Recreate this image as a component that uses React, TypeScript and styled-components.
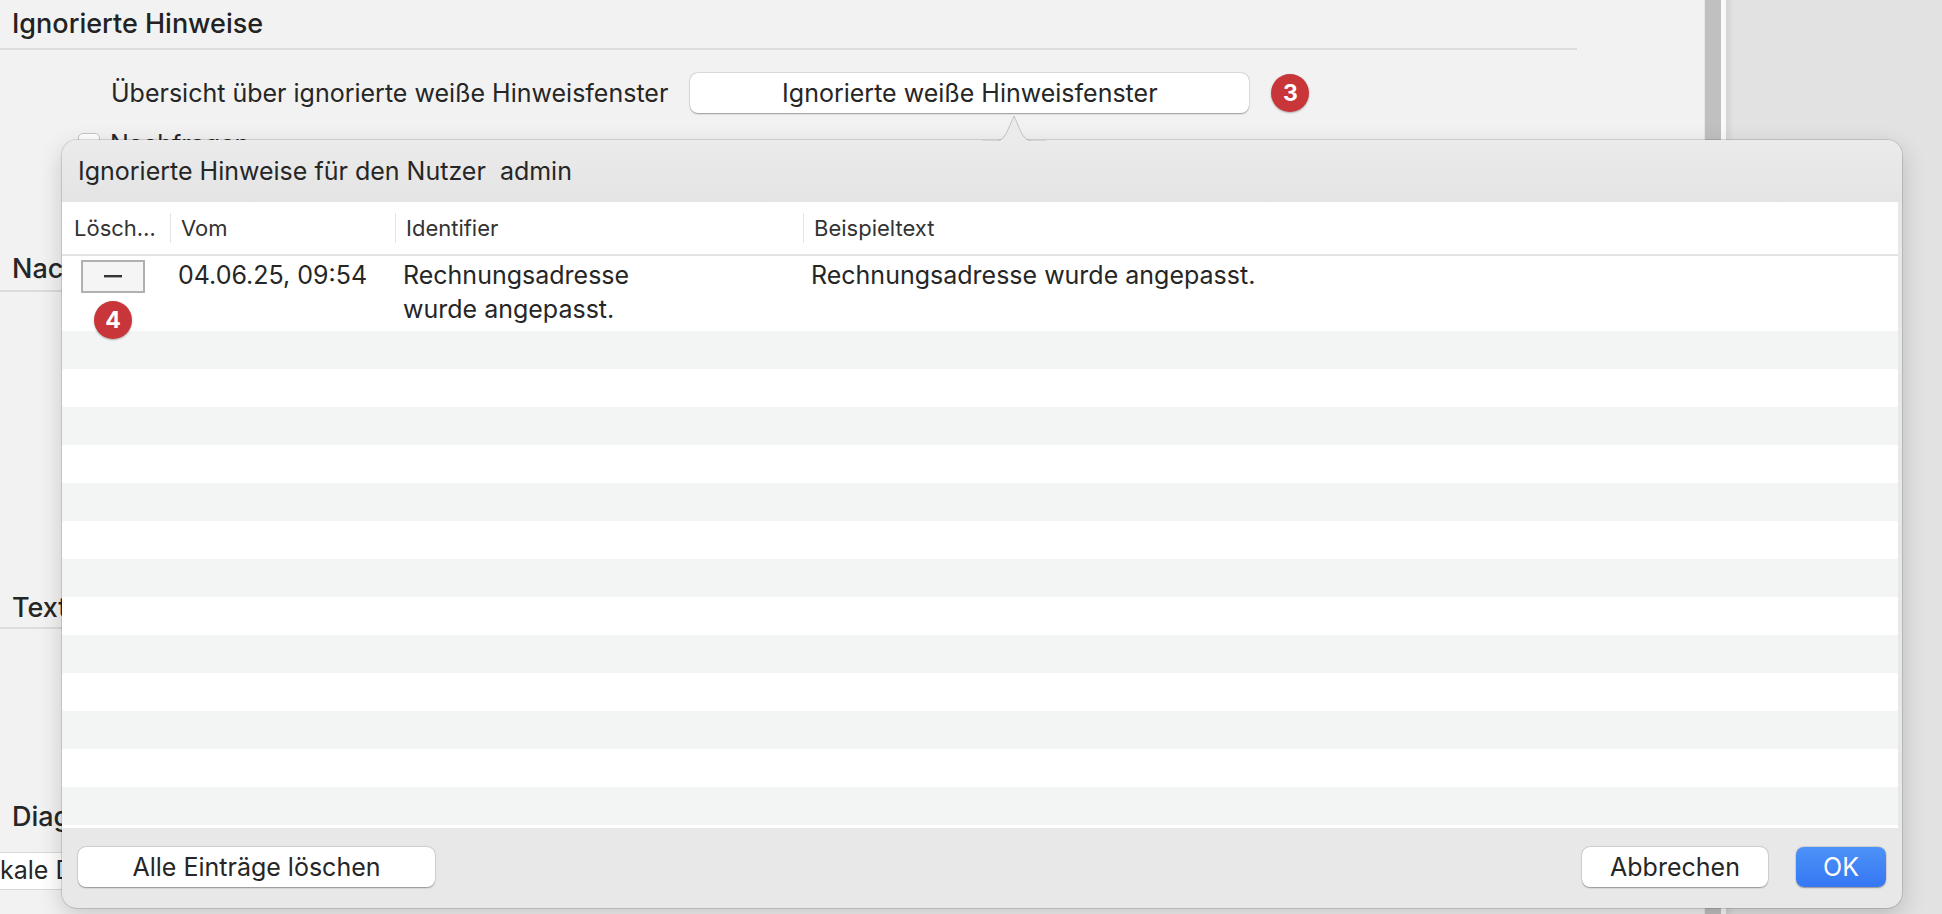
import React from "react";
import styled, { createGlobalStyle } from "styled-components";

const Global = createGlobalStyle`
  html, body { margin: 0; padding: 0; width: 1942px; height: 914px; overflow: hidden; }
  body { font-family: Inter, "Noto Sans", sans-serif; color: #262626; background: #e2e2e2; }
  * { box-sizing: border-box; }
`;

const Page = styled.div`
  position: relative; width: 1942px; height: 914px; display: flex;
`;
const Main = styled.div`
  width: 1704px; height: 914px; background: #f2f2f2; position: relative;
`;
const Scroll = styled.div`
  width: 22px; height: 914px; background: #fafafa; border-left: 1px solid #e6e6e6; display: flex;
`;
const Thumb = styled.div` width: 16px; background: #c0c0c0; `;
const Side = styled.div`
  flex: 1; background: linear-gradient(90deg, #d4d4d4 0, #e2e2e2 8px);
`;
const Section = styled.div<{ $h: number }>`
  height: ${p => p.$h}px; border-bottom: 2px solid #dcdcdc; width: 1577px;
  display: flex; align-items: flex-end; padding: 0 0 8px 12px;
  font-size: 27px; font-weight: 500; color: #222;
`;
const Row = styled.div`
  display: flex; align-items: center; height: 44px; margin-top: 21px; padding-left: 111px; gap: 22px;
  font-size: 25px;
`;
const MacBtn = styled.button<{ $w: number; $primary?: boolean }>`
  width: ${p => p.$w}px; height: 40px; border-radius: 8px; font-size: 25px;
  font-family: Inter, sans-serif;
  border: none; cursor: default; padding: 0; white-space: nowrap;
  background: ${p => (p.$primary ? "linear-gradient(#4c92f8,#3677f3)" : "#fff")};
  color: ${p => (p.$primary ? "#fff" : "#262626")};
  box-shadow: 0 0.5px 1.5px rgba(0,0,0,0.35), 0 0 0 0.5px rgba(0,0,0,0.08);
`;
const Badge = styled.div`
  width: 38px; height: 38px; border-radius: 50%; background: #c8363a; color: #fff;
  font-weight: 700; font-size: 23px; display: flex; align-items: center; justify-content: center;
  box-shadow: 0 1px 2px rgba(0,0,0,0.3);
`;
const HiddenLine = styled.div`
  display: flex; align-items: center; gap: 10px; padding-left: 78px; font-size: 25px; margin-top: 14px;
`;
const Check = styled.div` width: 22px; height: 22px; border-radius: 5px; border: 1px solid #c4c4c4; background: #fff;`;

const Popover = styled.div`
  position: absolute; left: 62px; top: 140px; width: 1840px; height: 768px;
  background: #e8e8e8; border-radius: 15px; display: flex; flex-direction: column;
  box-shadow: 0 0 0 1px rgba(0,0,0,0.12), 0 8px 24px rgba(0,0,0,0.18);
`;
const Arrow = styled.svg` position: absolute; left: 920px; top: -26px; `;
const Title = styled.div`
  height: 62px; display: flex; align-items: center; padding-left: 16px; font-size: 25px; color: #262626;
  background: linear-gradient(#ebebeb, #e4e4e4); border-radius: 15px 15px 0 0;
`;
const Table = styled.div` flex: 1; background: #fff; display: flex; flex-direction: column; margin-right: 4px; `;
const Head = styled.div`
  height: 54px; display: grid; grid-template-columns: 108px 225px 408px 1fr; align-items: center;
  border-bottom: 2px solid #e3e3e3; font-size: 22px; color: #333;
`;
const HCell = styled.div<{ $first?: boolean }>`
  padding-left: ${p => (p.$first ? 12 : 10)}px; height: 30px; display: flex; align-items: center;
  border-left: ${p => (p.$first ? "none" : "1px solid #e4e4e4")}; white-space: nowrap; overflow: hidden;
`;
const DataRow = styled.div`
  height: 75px; display: grid; grid-template-columns: 108px 225px 408px 1fr; font-size: 25px; color: #262626;
`;
const Cell = styled.div` padding: 2px 8px 0; line-height: 34px; white-space: nowrap; `;
const MinusBtn = styled.div`
  width: 64px; height: 33px; border: 2px solid #b0b0b0; background: #f5f5f5; margin: 4px 0 0 19px;
  display: flex; align-items: center; justify-content: center;
`;
const Stripe = styled.div<{ $odd: boolean }>` height: 38px; background: ${p => (p.$odd ? "#f3f4f4" : "#fff")}; `;
const Footer = styled.div`
  height: 80px; display: flex; align-items: center; padding: 0 16px 2px 16px; gap: 28px;
`;
const Spacer = styled.div` flex: 1; `;
const BgLabel = styled.div<{ $top: number }>`
  position: absolute; left: 12px; top: ${p => p.$top}px; font-size: 27px; font-weight: 500;
`;
const BgRule = styled.div<{ $top: number }>`
  position: absolute; left: 0; top: ${p => p.$top}px; width: 80px; height: 2px; background: #dcdcdc;
`;
const Field = styled.div`
  position: absolute; left: 0; top: 853px; width: 62px; height: 36px; background: #fff;
  font-size: 25px; padding: 2px 0 0 0; white-space: nowrap; overflow: hidden;
  box-shadow: 0 0 0 1px #d8d8d8;
`;
const BadgeWrap = styled.div` position: absolute; left: 32px; top: 161px; `;

export default function App() {
  return (
    <Page>
      <Global />
      <Main>
        <Section $h={50}>Ignorierte Hinweise</Section>
        <Row>
          <span>Übersicht über ignorierte weiße Hinweisfenster</span>
          <MacBtn $w={559}>Ignorierte weiße Hinweisfenster</MacBtn>
          <Badge>3</Badge>
        </Row>
        <HiddenLine><Check /><span>Nachfragen</span></HiddenLine>
        <BgLabel $top={252}>Nac</BgLabel>
        <BgRule $top={290} />
        <BgLabel $top={591}>Text</BgLabel>
        <BgRule $top={627} />
        <BgLabel $top={800}>Diag</BgLabel>
        <Field>kale D</Field>
      </Main>
      <Scroll><Thumb /></Scroll>
      <Side />
      <Popover>
        <Arrow width="64" height="28" viewBox="0 0 64 28">
          <path d="M0 27 L14 27 Q20 27 24 20 L32 2 L40 20 Q44 27 50 27 L64 27" fill="#ebebeb" stroke="rgba(0,0,0,0.18)" strokeWidth="1" />
          <rect x="0" y="27" width="64" height="2" fill="#ebebeb" />
        </Arrow>
        <Title>Ignorierte Hinweise für den Nutzer&nbsp;&nbsp;admin</Title>
        <Table>
          <Head>
            <HCell $first>Lösch…</HCell>
            <HCell>Vom</HCell>
            <HCell>Identifier</HCell>
            <HCell>Beispieltext</HCell>
          </Head>
          <DataRow>
            <div>
              <MinusBtn>
                <svg width="18" height="3"><rect width="18" height="2.4" fill="#333" /></svg>
              </MinusBtn>
            </div>
            <Cell>04.06.25, 09:54</Cell>
            <Cell>Rechnungsadresse<br />wurde angepasst.</Cell>
            <Cell>Rechnungsadresse wurde angepasst.</Cell>
          </DataRow>
          {Array.from({ length: 13 }).map((_, i) => (
            <Stripe key={i} $odd={i % 2 === 0} />
          ))}
        </Table>
        <Footer>
          <MacBtn $w={357}>Alle Einträge löschen</MacBtn>
          <Spacer />
          <MacBtn $w={186}>Abbrechen</MacBtn>
          <MacBtn $w={90} $primary>OK</MacBtn>
        </Footer>
        <BadgeWrap><Badge>4</Badge></BadgeWrap>
      </Popover>
    </Page>
  );
}
